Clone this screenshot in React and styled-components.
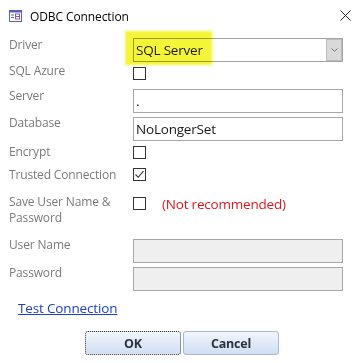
import React from "react";
import styled, { createGlobalStyle, css } from "styled-components";

const Global = createGlobalStyle`
  html, body { margin: 0; padding: 0; background: #fff; }
  body { font-family: "Open Sans", "Noto Sans", sans-serif; }
`;

const Dialog = styled.div`
  width: 362px;
  height: 363px;
  background: #fff;
  overflow: hidden;
  box-sizing: border-box;
`;

const TitleBar = styled.div`
  height: 30px;
  display: flex;
  align-items: flex-start;
  padding: 9px 11px 0 9px;
  box-sizing: border-box;
`;

const Title = styled.div`
  margin-left: 8px;
  font-size: 12px;
  line-height: 15px;
  color: #000;
  letter-spacing: -0.1px;
`;

const CloseBtn = styled.div`
  margin-left: auto;
  margin-top: 1px;
  width: 11px;
  height: 11px;
  display: flex;
`;

const Form = styled.div`
  margin-top: 8px;
  display: flex;
  flex-direction: column;
`;

const Row = styled.div`
  display: grid;
  grid-template-columns: 124px 210px;
  align-items: start;
  padding-left: 9px;
  height: ${(p) => p.$h}px;
`;

const Label = styled.div`
  font-size: 12px;
  line-height: 16px;
  margin-top: -1px;
  color: #7b7b7b;
  letter-spacing: -0.15px;
`;

const Field = styled.div`
  position: relative;
  display: flex;
  align-items: flex-start;
  margin-top: ${(p) => p.$mt || 0}px;
`;

const Select = styled.div`
  width: 210px;
  height: 24px;
  box-sizing: border-box;
  border: 1px solid #a3a3a3;
  display: flex;
  align-items: center;
  padding-left: 2px;
  font-size: 13.5px;
  color: #1a1a1a;
  letter-spacing: -0.2px;
`;

const DropButton = styled.div`
  margin-left: auto;
  width: 16px;
  height: 22px;
  box-sizing: border-box;
  background: #d9d9d9;
  border: 1px solid #bdbdbd;
  display: flex;
  align-items: center;
  justify-content: center;
`;

const Highlight = styled.div`
  position: absolute;
  left: -8px;
  top: -7px;
  width: 87px;
  height: 34px;
  background: #f5f538;
  mix-blend-mode: multiply;
  filter: blur(1.2px);
  pointer-events: none;
`;

const Input = styled.div`
  width: 210px;
  height: 24px;
  box-sizing: border-box;
  border: 1px solid #a7a7a7;
  background: ${(p) => (p.$disabled ? "#efefef" : "#fff")};
  display: flex;
  align-items: center;
  padding-left: 2px;
  font-size: 13.5px;
  color: #1a1a1a;
  letter-spacing: -0.2px;
`;

const Box = styled.div`
  width: 13px;
  height: 13px;
  box-sizing: border-box;
  border: 1px solid #333;
  background: #fff;
  display: flex;
  align-items: center;
  justify-content: center;
`;

const Note = styled.div`
  margin-left: 16px;
  margin-top: -1px;
  font-size: 13.5px;
  line-height: 17px;
  color: #e0161e;
  letter-spacing: -0.2px;
`;

const LinkRow = styled.div`
  padding: 5px 0 0 18px;
  height: 17px;
`;

const Link = styled.a`
  font-size: 13.5px;
  line-height: 17px;
  color: #1a3fc8;
  text-decoration: underline;
  letter-spacing: -0.15px;
  cursor: pointer;
`;

const Buttons = styled.div`
  margin-top: 18px;
  padding-left: 85px;
  display: flex;
  gap: 2px;
`;

const Button = styled.button`
  width: 96px;
  height: 24px;
  box-sizing: border-box;
  border-radius: 3px;
  border: 1px solid #a6b8d2;
  background: linear-gradient(#f2f6fc, #d0def3);
  font-family: "Open Sans", sans-serif;
  font-weight: 700;
  font-size: 12.5px;
  color: #2b3340;
  padding: 0;
  letter-spacing: -0.2px;
  ${(p) =>
    p.$focused &&
    css`
      border: 1px dotted #3a3a3a;
    `}
`;

const Check = () => (
  <svg width="11" height="11" viewBox="0 0 11 11">
    <path d="M1.5 5.5 L4.2 8.3 L9.5 2.2" fill="none" stroke="#333" strokeWidth="1.1" />
  </svg>
);

const AppIcon = () => (
  <svg width="13" height="12" viewBox="0 0 13 12" style={{ marginTop: 1 }}>
    <rect x="0.5" y="0.5" width="12" height="11" fill="#fff" stroke="#5a62b4" />
    <rect x="0.5" y="0.5" width="12" height="2" fill="#5a62b4" />
    <path d="M2 5 H5 M2 7.5 H5" stroke="#5a62b4" strokeWidth="1" />
    <rect x="6.5" y="4" width="4" height="5" fill="none" stroke="#8a5aa8" />
    <path d="M6.5 6.5 H10.5" stroke="#8a5aa8" />
  </svg>
);

export default function App() {
  return (
    <>
      <Global />
      <Dialog>
        <TitleBar>
          <AppIcon />
          <Title>ODBC Connection</Title>
          <CloseBtn>
            <svg width="11" height="11" viewBox="0 0 11 11">
              <path d="M0.5 0.5 L10.5 10.5 M10.5 0.5 L0.5 10.5" stroke="#222" strokeWidth="1" />
            </svg>
          </CloseBtn>
        </TitleBar>
        <Form>
          <Row $h={26}>
            <Label>Driver</Label>
            <Field>
              <Select>
                SQL Server
                <DropButton>
                  <svg width="7" height="4" viewBox="0 0 7 4">
                    <path d="M0.5 0.5 L3.5 3.3 L6.5 0.5" fill="none" stroke="#777" strokeWidth="1" />
                  </svg>
                </DropButton>
              </Select>
              <Highlight />
            </Field>
          </Row>
          <Row $h={25}>
            <Label>SQL Azure</Label>
            <Field $mt={3}>
              <Box />
            </Field>
          </Row>
          <Row $h={27}>
            <Label>Server</Label>
            <Field>
              <Input>.</Input>
            </Field>
          </Row>
          <Row $h={29}>
            <Label>Database</Label>
            <Field $mt={1}>
              <Input>NoLongerSet</Input>
            </Field>
          </Row>
          <Row $h={23}>
            <Label>Encrypt</Label>
            <Field $mt={1}>
              <Box />
            </Field>
          </Row>
          <Row $h={27}>
            <Label>Trusted Connection</Label>
            <Field>
              <Box>
                <Check />
              </Box>
            </Field>
          </Row>
          <Row $h={43}>
            <Label>
              Save User Name &amp;
              <br />
              Password
            </Label>
            <Field $mt={2}>
              <Box />
              <Note>(Not recommended)</Note>
            </Field>
          </Row>
          <Row $h={28}>
            <Label>User Name</Label>
            <Field $mt={1}>
              <Input $disabled />
            </Field>
          </Row>
          <Row $h={25}>
            <Label>Password</Label>
            <Field $mt={1}>
              <Input $disabled />
            </Field>
          </Row>
        </Form>
        <LinkRow>
          <Link>Test Connection</Link>
        </LinkRow>
        <Buttons>
          <Button $focused>OK</Button>
          <Button>Cancel</Button>
        </Buttons>
      </Dialog>
    </>
  );
}
